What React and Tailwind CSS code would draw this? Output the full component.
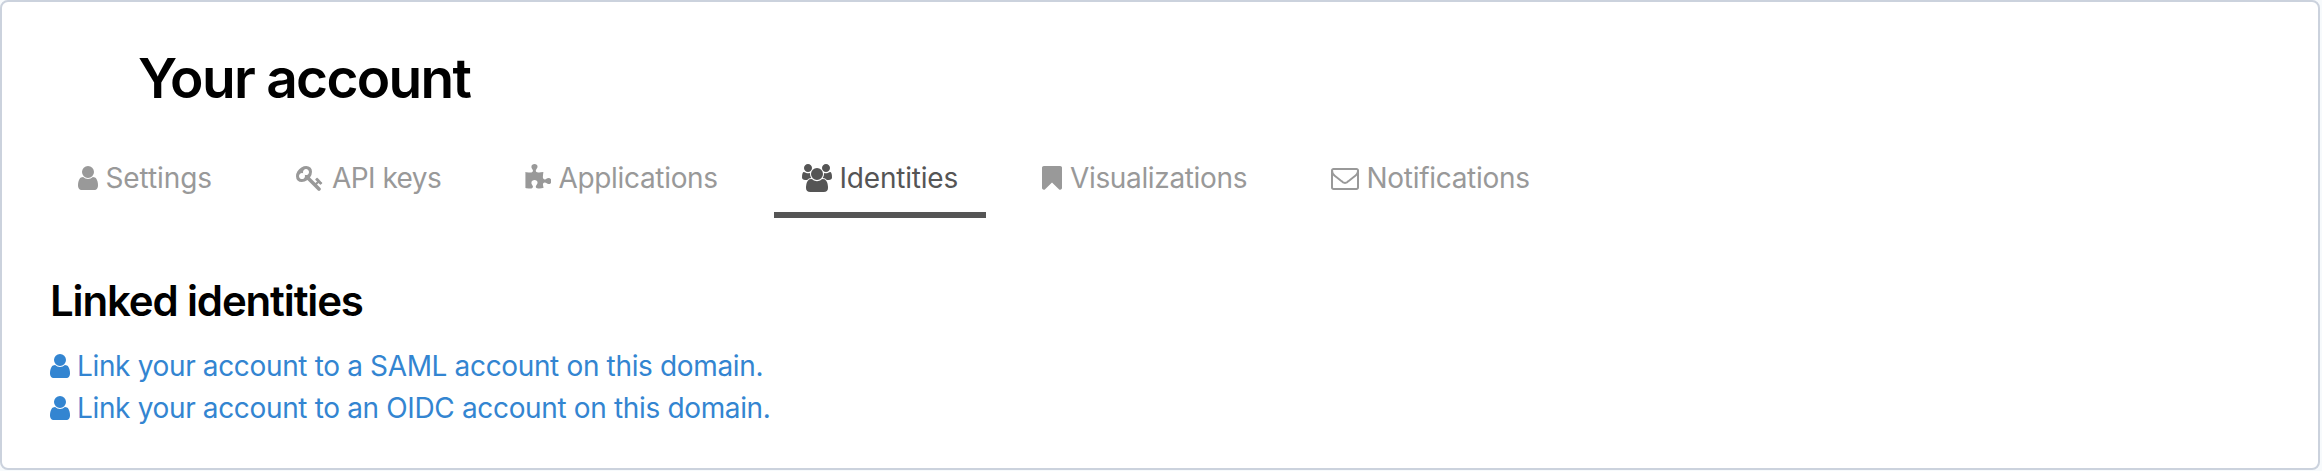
const ICONS = {
  user: ["256 0 1280 1792", "w-5", "M1536 1399q0 109-62.5 187t-150.5 78h-854q-88 0-150.5-78t-62.5-187q0-85 8.5-160.5t31.5-152 58.5-131 94-89 134.5-34.5q131 128 313 128t313-128q76 0 134.5 34.5t94 89 58.5 131 31.5 152 8.5 160.5zm-256-887q0 159-112.5 271.5t-271.5 112.5-271.5-112.5-112.5-271.5 112.5-271.5 271.5-112.5 271.5 112.5 112.5 271.5z"],
  key: ["0 0 1792 1792", "w-7", "M832 512q0-80-56-136t-136-56-136 56-56 136q0 42 19 83-41-19-83-19-80 0-136 56t-56 136 56 136 136 56 136-56 56-136q0-42-19-83 41 19 83 19 80 0 136-56t56-136zm851 704q0 17-49 66t-66 49q-9 0-28.5-16t-36.5-33-38.5-40-24.5-26l-96 96 220 220q28 28 28 68 0 42-39 81t-81 39q-40 0-68-28l-671-671q-176 131-365 131-163 0-265.5-102.5t-102.5-265.5q0-160 95-313t248-248 313-95q163 0 265.5 102.5t102.5 265.5q0 189-131 365l355 355 96-96q-3-3-26-24.5t-40-38.5-33-36.5-16-28.5q0-17 49-66t66-49q13 0 23 10 6 6 46 44.5t82 79.5 86.5 86 73 78 28.5 41z"],
  puzzle: ["64 0 1664 1792", "w-[26px]", "M1755 1098q0 81-44.5 135t-123.5 54q-41 0-77.5-17.5t-59-38-56.5-38-71-17.5q-110 0-110 124 0 39 16 115t15 115v5q-22 0-33 1-34 3-97.5 11.5t-115.5 13.5-98 5q-61 0-103-26.5t-42-83.5q0-37 17.5-71t38-56.5 38-59 17.5-77.5q0-79-54-123.5t-135-44.5q-84 0-143 45.5t-59 127.5q0 43 15 83t33.5 64.5 33.5 53 15 50.5q0 45-46 89-37 35-117 35-95 0-245-24-9-2-27.5-4t-27.5-4l-13-2q-1 0-3-1-2 0-2-1v-1024q2 1 17.5 3.5t34 5 21.5 3.5q150 24 245 24 80 0 117-35 46-44 46-89 0-22-15-50.5t-33.5-53-33.5-64.5-15-83q0-82 59-127.5t144-45.5q80 0 134 44.5t54 123.5q0 41-17.5 77.5t-38 59-38 56.5-17.5 71q0 57 42 83.5t103 26.5q64 0 180-15t163-17v2q-1 2-3.5 17.5t-5 34-3.5 21.5q-24 150-24 245 0 80 35 117 44 46 89 46 22 0 50.5-15t53-33.5 64.5-33.5 83-15q82 0 127.5 59t45.5 143z"],
  users: ["0 0 1920 1792", "w-[30px]", "M593 896q-162 5-265 128h-134q-82 0-138-40.5t-56-118.5q0-353 124-353 6 0 43.5 21t97.5 42.5 119 21.5q67 0 133-23-5 37-5 66 0 139 81 256zm1071 637q0 120-73 189.5t-194 69.5h-874q-121 0-194-69.5t-73-189.5q0-53 3.5-103.5t14-109 26.5-108.5 43-97.5 62-81 85.5-53.5 111.5-20q10 0 43 21.5t73 48 107 48 135 21.5 135-21.5 107-48 73-48 43-21.5q61 0 111.5 20t85.5 53.5 62 81 43 97.5 26.5 108.5 14 109 3.5 103.5zm-1024-1277q0 106-75 181t-181 75-181-75-75-181 75-181 181-75 181 75 75 181zm704 384q0 159-112.5 271.5t-271.5 112.5-271.5-112.5-112.5-271.5 112.5-271.5 271.5-112.5 271.5 112.5 112.5 271.5zm576 225q0 78-56 118.5t-138 40.5h-134q-103-123-265-128 81-117 81-256 0-29-5-66 66 23 133 23 59 0 119-21.5t97.5-42.5 43.5-21q124 0 124 353zm-128-609q0 106-75 181t-181 75-181-75-75-181 75-181 181-75 181 75 75 181z"],
  bookmark: ["256 0 1280 1792", "w-5", "M1420 128q23 0 44 9 33 13 52.5 41t19.5 62v1289q0 34-19.5 62t-52.5 41q-19 8-44 8-48 0-83-32l-441-424-441 424q-36 33-83 33-23 0-44-9-33-13-52.5-41t-19.5-62v-1289q0-34 19.5-62t52.5-41q21-9 44-9h1048z"],
  envelope: ["0 0 1792 1792", "w-7", "M1664 1504v-768q-32 36-69 66-268 206-426 338-51 43-83 67t-86.5 48.5-102.5 24.5h-2q-48 0-102.5-24.5t-86.5-48.5-83-67q-158-132-426-338-37-30-69-66v768q0 13 9.5 22.5t22.5 9.5h1472q13 0 22.5-9.5t9.5-22.5zm0-1051v-24.5l-.5-13-3-12.5-5.5-9-9-7.5-14-2.5h-1472q-13 0-22.5 9.5t-9.5 22.5q0 168 147 284 193 152 401 317 6 5 35 29.5t46 37.5 44.5 31.5 50.5 27.5 43 9h2q20 0 43-9t50.5-27.5 44.5-31.5 46-37.5 35-29.5q208-165 401-317 54-43 100.5-115.5t46.5-131.5zm128-37v1088q0 66-47 113t-113 47h-1472q-66 0-113-47t-47-113v-1088q0-66 47-113t113-47h1472q66 0 113 47t47 113z"],
};

function Icon({ name }) {
  const [viewBox, width, d] = ICONS[name];
  return (
    <svg viewBox={viewBox} className={`h-7 shrink-0 ${width}`} fill="currentColor" aria-hidden="true">
      <path d={d} />
    </svg>
  );
}

const TABS = [
  ["user", "Settings", "w-[190px] gap-[7.5px] tracking-[-0.1px]"],
  ["key", "API keys", "w-[201px] gap-2 tracking-[-0.55px]"],
  ["puzzle", "Applications", "w-[249px] gap-[7.5px] tracking-[-0.33px]"],
  ["users", "Identities", "w-[212px] gap-[7.5px] tracking-[-0.2px]"],
  ["bookmark", "Visualizations", "w-[261px] gap-2 tracking-[-0.35px]"],
  ["envelope", "Notifications", "w-[255px] gap-[7.5px] tracking-[-0.3px]"],
];

const LINKS = [
  "Link your account to a SAML account on this domain.",
  "Link your account to an OIDC account on this domain.",
];

export default function App() {
  return (
    <div className="h-[471px] w-full bg-[#f7fafc] pr-0.5 pb-px font-['Inter',sans-serif] text-[28px] text-black">
      <main className="h-full rounded-lg border-2 border-[#cbd2dd] bg-white pt-[46px] pl-[48px]">
        <h1 className="pl-[88px] text-[55px] leading-[60px] font-semibold tracking-[-1.7px]">Your account</h1>
        <nav className="mt-[27px] flex gap-7">
          {TABS.map(([icon, label, sizing]) => (
            <a
              key={label}
              className={`flex h-[83px] shrink-0 border-b-[6px] pt-[29px] pl-7 leading-7 whitespace-nowrap ${sizing} ${
                label === "Identities" ? "border-[#555] text-[#555]" : "border-transparent text-[#999]"
              }`}
            >
              <Icon name={icon} />
              {label}
            </a>
          ))}
        </nav>
        <h2 className="mt-[58px] text-[42px] leading-[50px] font-semibold tracking-[-1.15px]">Linked identities</h2>
        <ul className="mt-[19px]">
          {LINKS.map((text) => (
            <li key={text} className="flex h-[42px] items-center gap-[7px] tracking-[-0.35px] text-[#3385d1]">
              <Icon name="user" />
              {text}
            </li>
          ))}
        </ul>
      </main>
    </div>
  );
}
